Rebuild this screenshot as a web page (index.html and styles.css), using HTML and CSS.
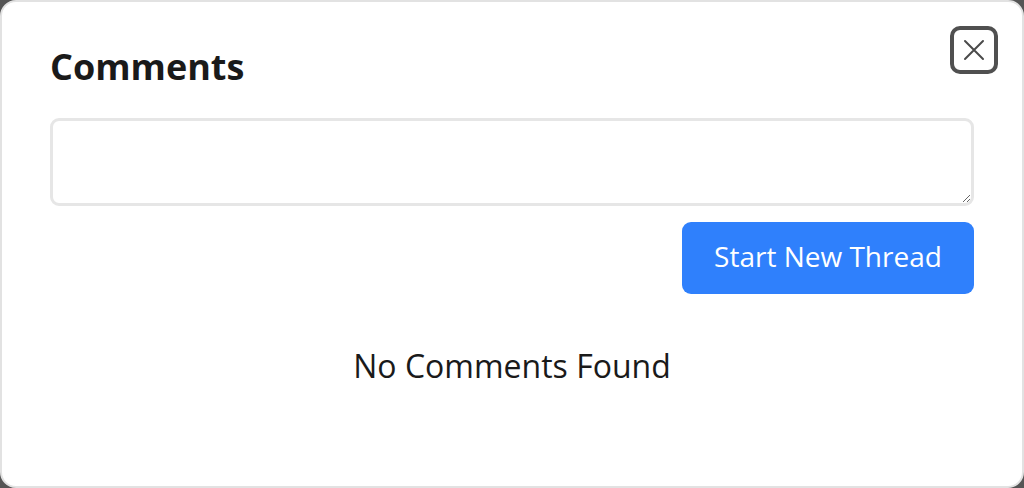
FILE: index.html
```html
<!DOCTYPE html>
<html>
<head>
<meta charset="utf-8">
<link rel="stylesheet" href="styles.css">
</head>
<body>
<div class="dialog">
  <div class="header">
    <h1 class="title">Comments</h1>
    <button class="close" aria-label="Close">
      <svg width="22" height="22" viewBox="0 0 22 22"><path d="M2 2 L20 20 M20 2 L2 20" stroke="#4a4a4a" stroke-width="2" stroke-linecap="round" fill="none"/></svg>
    </button>
  </div>
  <textarea class="input"></textarea>
  <div class="actions">
    <button class="primary">Start New Thread</button>
  </div>
  <p class="empty">No Comments Found</p>
</div>
</body>
</html>
```

FILE: styles.css
```css
html, body {
  margin: 0;
  padding: 0;
  background: #555555;
  width: 1024px;
  height: 488px;
  overflow: hidden;
}
.dialog {
  box-sizing: border-box;
  width: 1024px;
  height: 488px;
  background: #ffffff;
  border: 2px solid #e2e2e2;
  border-radius: 16px;
  padding: 24px 24px 0 48px;
  font-family: "Open Sans", "Noto Sans", sans-serif;
  color: #1a1a1a;
  display: flex;
  flex-direction: column;
}
.header {
  display: flex;
  justify-content: space-between;
  align-items: flex-start;
}
.title {
  margin: 19px 0 0 0;
  font-size: 36px;
  line-height: 44px;
  font-weight: 700;
  color: #1a1a1a;
}
.close {
  width: 48px;
  height: 48px;
  box-sizing: border-box;
  border: 4px solid #505050;
  border-radius: 10px;
  background: #ffffff;
  padding: 0;
  display: flex;
  align-items: center;
  justify-content: center;
  cursor: pointer;
}
.input {
  box-sizing: border-box;
  margin: 29px 24px 0 0;
  height: 88px;
  border: 3px solid #e6e6e6;
  border-radius: 9px;
  resize: vertical;
  font-family: inherit;
  font-size: 18px;
  outline: none;
}
.actions {
  display: flex;
  justify-content: flex-end;
  margin: 16px 24px 0 0;
}
.primary {
  width: 292px;
  height: 72px;
  border: none;
  border-radius: 9px;
  background: #2f80fc;
  color: #ffffff;
  font-family: "Open Sans", "Noto Sans", sans-serif;
  font-size: 28px;
  padding: 0 0 4px 0;
  cursor: pointer;
}
.empty {
  margin: 50px 24px 0 0;
  text-align: center;
  font-size: 32px;
  color: #1a1a1a;
}
```
